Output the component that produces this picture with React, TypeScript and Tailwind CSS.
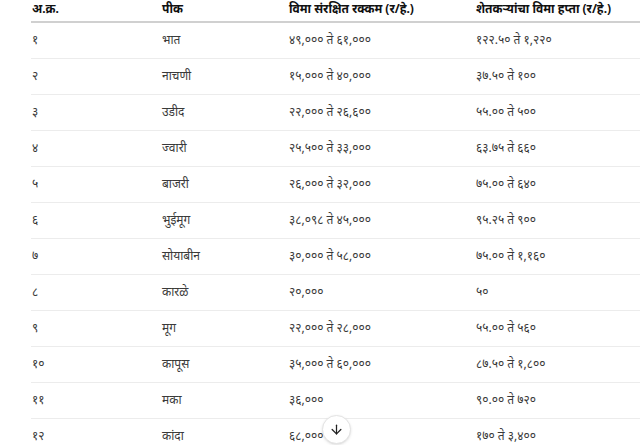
import React from 'react';
import { ArrowDown } from 'lucide-react';

const rows = [
  ['१', 'भात', '४९,००० ते ६१,०००', '१२२.५० ते १,२२०'],
  ['२', 'नाचणी', '१५,००० ते ४०,०००', '३७.५० ते १००'],
  ['३', 'उडीद', '२२,००० ते २६,६००', '५५.०० ते ५००'],
  ['४', 'ज्वारी', '२५,५०० ते ३३,०००', '६३.७५ ते ६६०'],
  ['५', 'बाजरी', '२६,००० ते ३२,०००', '७५.०० ते ६४०'],
  ['६', 'भुईमूग', '३८,०९८ ते ४५,०००', '९५.२५ ते ९००'],
  ['७', 'सोयाबीन', '३०,००० ते ५८,०००', '७५.०० ते १,१६०'],
  ['८', 'कारळे', '२०,०००', '५०'],
  ['९', 'मूग', '२२,००० ते २८,०००', '५५.०० ते ५६०'],
  ['१०', 'कापूस', '३५,००० ते ६०,०००', '८७.५० ते १,८००'],
  ['११', 'मका', '३६,०००', '९०.०० ते ७२०'],
  ['१२', 'कांदा', '६८,०००', '१७० ते ३,४००'],
];

export default function App() {
  return (
    <div className="relative h-[445px] w-[640px] overflow-hidden bg-white font-['Noto_Sans','Noto_Sans_Devanagari',sans-serif] text-[12px]">
      <table className="-mt-[4px] ml-[31px] w-[640px] table-fixed border-collapse text-left">
        <thead>
          <tr className="h-[26px] border-b-2 border-[#d0d0d0]">
            <th className="w-[131px] p-0 pl-px font-bold text-[#111]">अ.क्र.</th>
            <th className="w-[127px] p-0 font-bold text-[#111]">पीक</th>
            <th className="w-[187px] p-0 font-bold text-[#111]">विमा संरक्षित रक्कम (र/हे.)</th>
            <th className="p-0 font-bold text-[#111]">शेतकऱ्यांचा विमा हप्ता (र/हे.)</th>
          </tr>
        </thead>
        <tbody>
          {rows.map((r) => (
            <tr key={r[0]} className="h-[36px] border-b border-[#ececec] text-[#3a3a3a]">
              <td className="p-0 pl-px">{r[0]}</td>
              <td className="p-0">{r[1]}</td>
              <td className="p-0">{r[2]}</td>
              <td className="p-0">{r[3]}</td>
            </tr>
          ))}
        </tbody>
      </table>
      <button className="absolute left-[322px] top-[415px] flex h-[29px] w-[29px] items-center justify-center rounded-full border border-[#e3e3e3] bg-white text-[#222] shadow-sm">
        <ArrowDown size={15} strokeWidth={2} />
      </button>
    </div>
  );
}
